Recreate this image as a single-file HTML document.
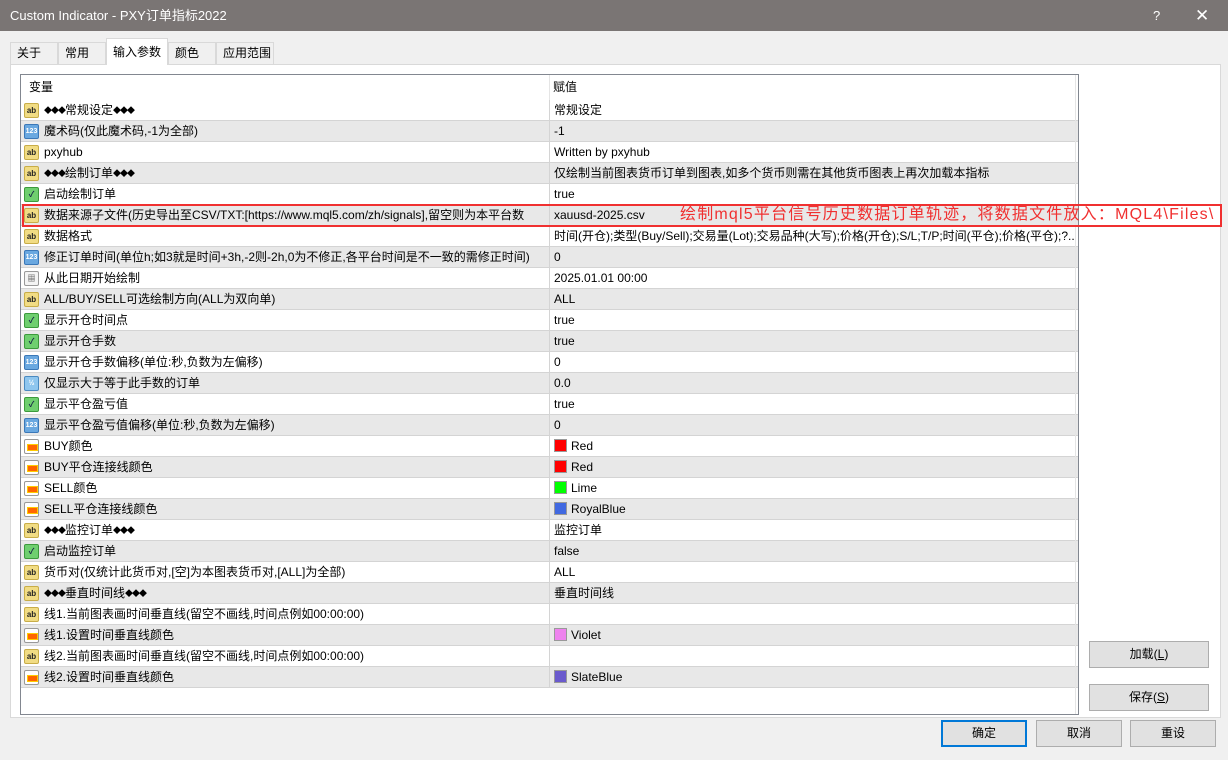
<!DOCTYPE html>
<html><head><meta charset="utf-8"><style>
*{box-sizing:border-box;margin:0;padding:0}
body{width:1228px;height:760px;overflow:hidden;background:#f0f0f0;font-family:"Liberation Sans","Noto Sans CJK SC",sans-serif;font-size:12px;color:#000;position:relative}
.title{position:absolute;left:0;top:0;width:1228px;height:31px;background:#7a7574;color:#fff;font-size:13px;line-height:31px;padding-left:10px}
.title .q{position:absolute;left:1153px;top:0}
.title .x{position:absolute;left:1195px;top:0;font-size:17px}
.tab{position:absolute;top:42px;height:22px;border:1px solid #d9d9d9;border-bottom:none;background:#f0f0f0;line-height:20px;padding-left:6px}
.tab.on{top:38px;height:27px;background:#fff;border-color:#d9d9d9;padding-top:3px}
.panel{position:absolute;left:10px;top:64px;width:1211px;height:654px;background:#fff;border:1px solid #d9d9d9}
.list{position:absolute;left:20px;top:74px;width:1059px;height:641px;border:1px solid #828790;background:#fff;overflow:hidden}
.hdr{position:absolute;top:0;height:25px;line-height:25px}
.row{position:absolute;left:0;width:1057px;height:21px;border-bottom:1px solid #d4d4d4;line-height:20px}
.row.g{background:#e8e8e8}
.row .n{position:absolute;left:23px;top:0;white-space:nowrap}
.row .v{position:absolute;left:528px;top:0;white-space:nowrap;border-left:1px solid #d4d4d4;padding-left:4px;height:20px;width:529px}
.dm{font-size:8px;vertical-align:1px;letter-spacing:-1px}
.ic{position:absolute;left:3px;top:3px;width:15px;height:15px;border-radius:2px;font-size:8px;line-height:14px;text-align:center;font-weight:bold}
.ab{background:#f1dc84;border:1px solid #c8ad48;color:#222}
.n123{background:#6aa8e0;border:1px solid #3b78b8;color:#fff;font-size:7px}
.bool{background:#6fcf6f;border:1px solid #3c9a3c;color:#124}
.dbl{background:#8fc6ee;border:1px solid #4a8ac0;color:#fff;font-size:7px}
.dt{background:#f4f4f4;border:1px solid #999;color:#555}
.col{background:#fff;border:1px solid #999}
.col:after{content:"";position:absolute;left:2px;top:4px;width:9px;height:5px;background:#f60;border:1px solid #fc0}
.sw{display:inline-block;width:13px;height:13px;border:1px solid #999;vertical-align:-2px;margin-right:4px}
.btn{position:absolute;height:27px;background:#e1e1e1;border:1px solid #adadad;text-align:center;line-height:25px;font-size:12px}
.red{position:absolute;left:22px;top:204px;width:1200px;height:23px;border:2px solid #f03030}
.redt{position:absolute;left:680px;top:205px;color:#f03030;font-size:16px;line-height:20px;white-space:nowrap;letter-spacing:1.2px}
</style></head><body>
<div class="title">Custom Indicator - PXY订单指标2022<span class="q">?</span><span class="x">✕</span></div>
<div class="tab" style="left:10px;width:48px">关于</div>
<div class="tab" style="left:58px;width:48px">常用</div>
<div class="tab" style="left:216px;width:58px">应用范围</div>
<div class="tab" style="left:168px;width:48px">颜色</div>
<div class="panel"></div>
<div class="tab on" style="left:106px;width:62px;z-index:2">输入参数</div>
<div class="list">
<div class="hdr" style="left:8px">变量</div>
<div class="hdr" style="left:532px">赋值</div>
<div id="rows"></div>
<div style="position:absolute;left:528px;top:0;width:1px;height:25px;background:#e5e5e5"></div>
<div style="position:absolute;left:1054px;top:0;width:1px;height:641px;background:#e5e5e5"></div>
</div>
<div class="red"></div>
<div class="redt">绘制mql5平台信号历史数据订单轨迹，将数据文件放入：MQL4\Files\</div>
<div class="btn" style="left:1089px;top:641px;width:120px">加载(<u>L</u>)</div>
<div class="btn" style="left:1089px;top:684px;width:120px">保存(<u>S</u>)</div>
<div class="btn" style="left:941px;top:720px;width:86px;border:2px solid #0078d7;line-height:23px">确定</div>
<div class="btn" style="left:1036px;top:720px;width:86px">取消</div>
<div class="btn" style="left:1130px;top:720px;width:86px">重设</div>
<script>
var D='<span class="dm">◆◆◆</span>';
var d=[
["ab",D+"常规设定"+D,"常规设定"],
["n123","魔术码(仅此魔术码,-1为全部)","-1"],
["ab","pxyhub","Written by pxyhub"],
["ab",D+"绘制订单"+D,"仅绘制当前图表货币订单到图表,如多个货币则需在其他货币图表上再次加载本指标"],
["bool","启动绘制订单","true"],
["ab","数据来源子文件(历史导出至CSV/TXT:[https://www.mql5.com/zh/signals],留空则为本平台数","xauusd-2025.csv"],
["ab","数据格式","时间(开仓);类型(Buy/Sell);交易量(Lot);交易品种(大写);价格(开仓);S/L;T/P;时间(平仓);价格(平仓);?.."],
["n123","修正订单时间(单位h;如3就是时间+3h,-2则-2h,0为不修正,各平台时间是不一致的需修正时间)","0"],
["dt","从此日期开始绘制","2025.01.01 00:00"],
["ab","ALL/BUY/SELL可选绘制方向(ALL为双向单)","ALL"],
["bool","显示开仓时间点","true"],
["bool","显示开仓手数","true"],
["n123","显示开仓手数偏移(单位:秒,负数为左偏移)","0"],
["dbl","仅显示大于等于此手数的订单","0.0"],
["bool","显示平仓盈亏值","true"],
["n123","显示平仓盈亏值偏移(单位:秒,负数为左偏移)","0"],
["col","BUY颜色","Red","#ff0000"],
["col","BUY平仓连接线颜色","Red","#ff0000"],
["col","SELL颜色","Lime","#00ff00"],
["col","SELL平仓连接线颜色","RoyalBlue","#4169e1"],
["ab",D+"监控订单"+D,"监控订单"],
["bool","启动监控订单","false"],
["ab","货币对(仅统计此货币对,[空]为本图表货币对,[ALL]为全部)","ALL"],
["ab",D+"垂直时间线"+D,"垂直时间线"],
["ab","线1.当前图表画时间垂直线(留空不画线,时间点例如00:00:00)",""],
["col","线1.设置时间垂直线颜色","Violet","#ee82ee"],
["ab","线2.当前图表画时间垂直线(留空不画线,时间点例如00:00:00)",""],
["col","线2.设置时间垂直线颜色","SlateBlue","#6a5acd"]];
var lab={ab:"ab",n123:"123",bool:"✓",dbl:"½",dt:"▦",col:""};
var h="";
d.forEach(function(r,i){
 var v=r[3]?'<span class="sw" style="background:'+r[3]+'"></span>'+r[2]:r[2];
 h+='<div class="row'+(i%2?' g':'')+'" style="top:'+(25+i*21)+'px"><span class="ic '+r[0]+'">'+lab[r[0]]+'</span><span class="n">'+r[1]+'</span><span class="v">'+v+'</span></div>';
});
document.getElementById("rows").innerHTML=h;
</script>
</body></html>
